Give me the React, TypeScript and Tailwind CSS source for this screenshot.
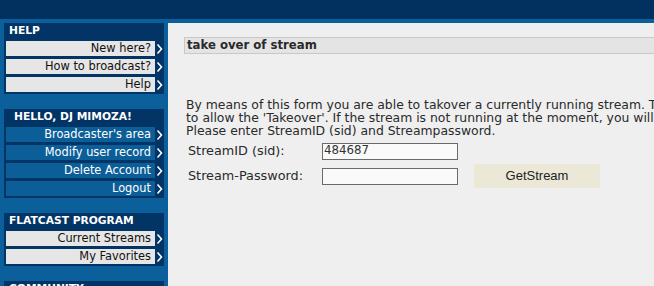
import React from "react";

type Item = { label: string };

const verdana = { fontFamily: '"DejaVu Sans", Verdana, sans-serif' };

function Chevron() {
  return (
    <svg width="7" height="12" viewBox="0 0 7 12" className="shrink-0">
      <path d="M1.5 1.5 L5.5 6 L1.5 10.5" fill="none" stroke="#ffffff" strokeWidth="1.6" />
    </svg>
  );
}

function MenuBox({ title, items, dark, indent }: { title: string; items: Item[]; dark?: boolean; indent?: boolean }) {
  return (
    <div className="bg-[#023466] pb-[2px] mb-[15px]">
      <div
        className={
          "h-[15px] text-[10.7px] leading-[15px] font-bold text-white " + (indent ? "pl-[10px]" : "pl-[5px]")
        }
      >
        {title}
      </div>
      {items.map((it) => (
        <div key={it.label} className="mt-[3px] h-[15px] flex items-center">
          <div
            className={
              "ml-[2px] w-[149px] h-[15px] text-right pr-[4px] text-[11.4px] leading-[15px] " +
              (dark ? "bg-[#0b5e98] text-white" : "bg-[#e6e6e6] text-[#111]")
            }
          >
            {it.label}
          </div>
          <div className="flex-1 flex justify-center">
            <Chevron />
          </div>
        </div>
      ))}
    </div>
  );
}

export default function App() {
  return (
    <div className="w-[654px] h-[286px] overflow-hidden bg-[#0b5f9b]" style={verdana}>
      {/* top bar */}
      <div className="h-[19px] bg-[#02305f]" />
      <div className="flex pt-[4px]">
        {/* sidebar */}
        <div className="w-[168px] shrink-0 px-[4px]">
          <MenuBox
            title="HELP"
            items={[{ label: "New here?" }, { label: "How to broadcast?" }, { label: "Help" }]}
          />
          <MenuBox
            title="HELLO, DJ MIMOZA!"
            dark
            indent
            items={[
              { label: "Broadcaster's area" },
              { label: "Modify user record" },
              { label: "Delete Account" },
              { label: "Logout" },
            ]}
          />
          <MenuBox
            title="FLATCAST PROGRAM"
            items={[{ label: "Current Streams" }, { label: "My Favorites" }]}
          />
          <MenuBox title="COMMUNITY" items={[{ label: "Chat" }]} />
        </div>

        {/* content */}
        <div className="flex-1 bg-[#efefef] h-[300px] pl-[16px] pt-[14px] whitespace-nowrap text-[#2a2a2a]">
          <div className="h-[17px] w-[600px] bg-[#e4e4e4] border border-r-0 border-[#c8c8c8] pl-[2px] text-[11.7px] leading-[15px] font-bold">
            take over of stream
          </div>

          <div className="mt-[44px] pl-[2px] text-[12.4px] leading-[13px]">
            <div>By means of this form you are able to takover a currently running stream. The owner of the stream has</div>
            <div>to allow the 'Takeover'. If the stream is not running at the moment, you will get the stream.</div>
            <div>Please enter StreamID (sid) and Streampassword.</div>
          </div>

          <div className="mt-[3px] text-[12.8px]">
            <div className="flex items-center h-[22px]">
              <div className="w-[138px] pl-[4px]">StreamID (sid):</div>
              <input
                defaultValue="484687"
                className="w-[136px] h-[17px] border border-[#6a6a6a] bg-[#fafafa] px-[1px] text-[11.8px] text-[#333] outline-none"
                style={verdana}
              />
            </div>
            <div className="flex items-center h-[28px]">
              <div className="w-[138px] pl-[4px]">Stream-Password:</div>
              <input
                type="password"
                className="w-[136px] h-[17px] border border-[#6a6a6a] bg-[#fafafa] outline-none"
              />
              <button
                className="ml-[16px] w-[126px] h-[24px] bg-[#ebe8d8] text-[13px] text-[#222]"
                style={{ fontFamily: '"Liberation Sans", Arial, sans-serif' }}
              >
                GetStream
              </button>
            </div>
          </div>
        </div>
      </div>
    </div>
  );
}
